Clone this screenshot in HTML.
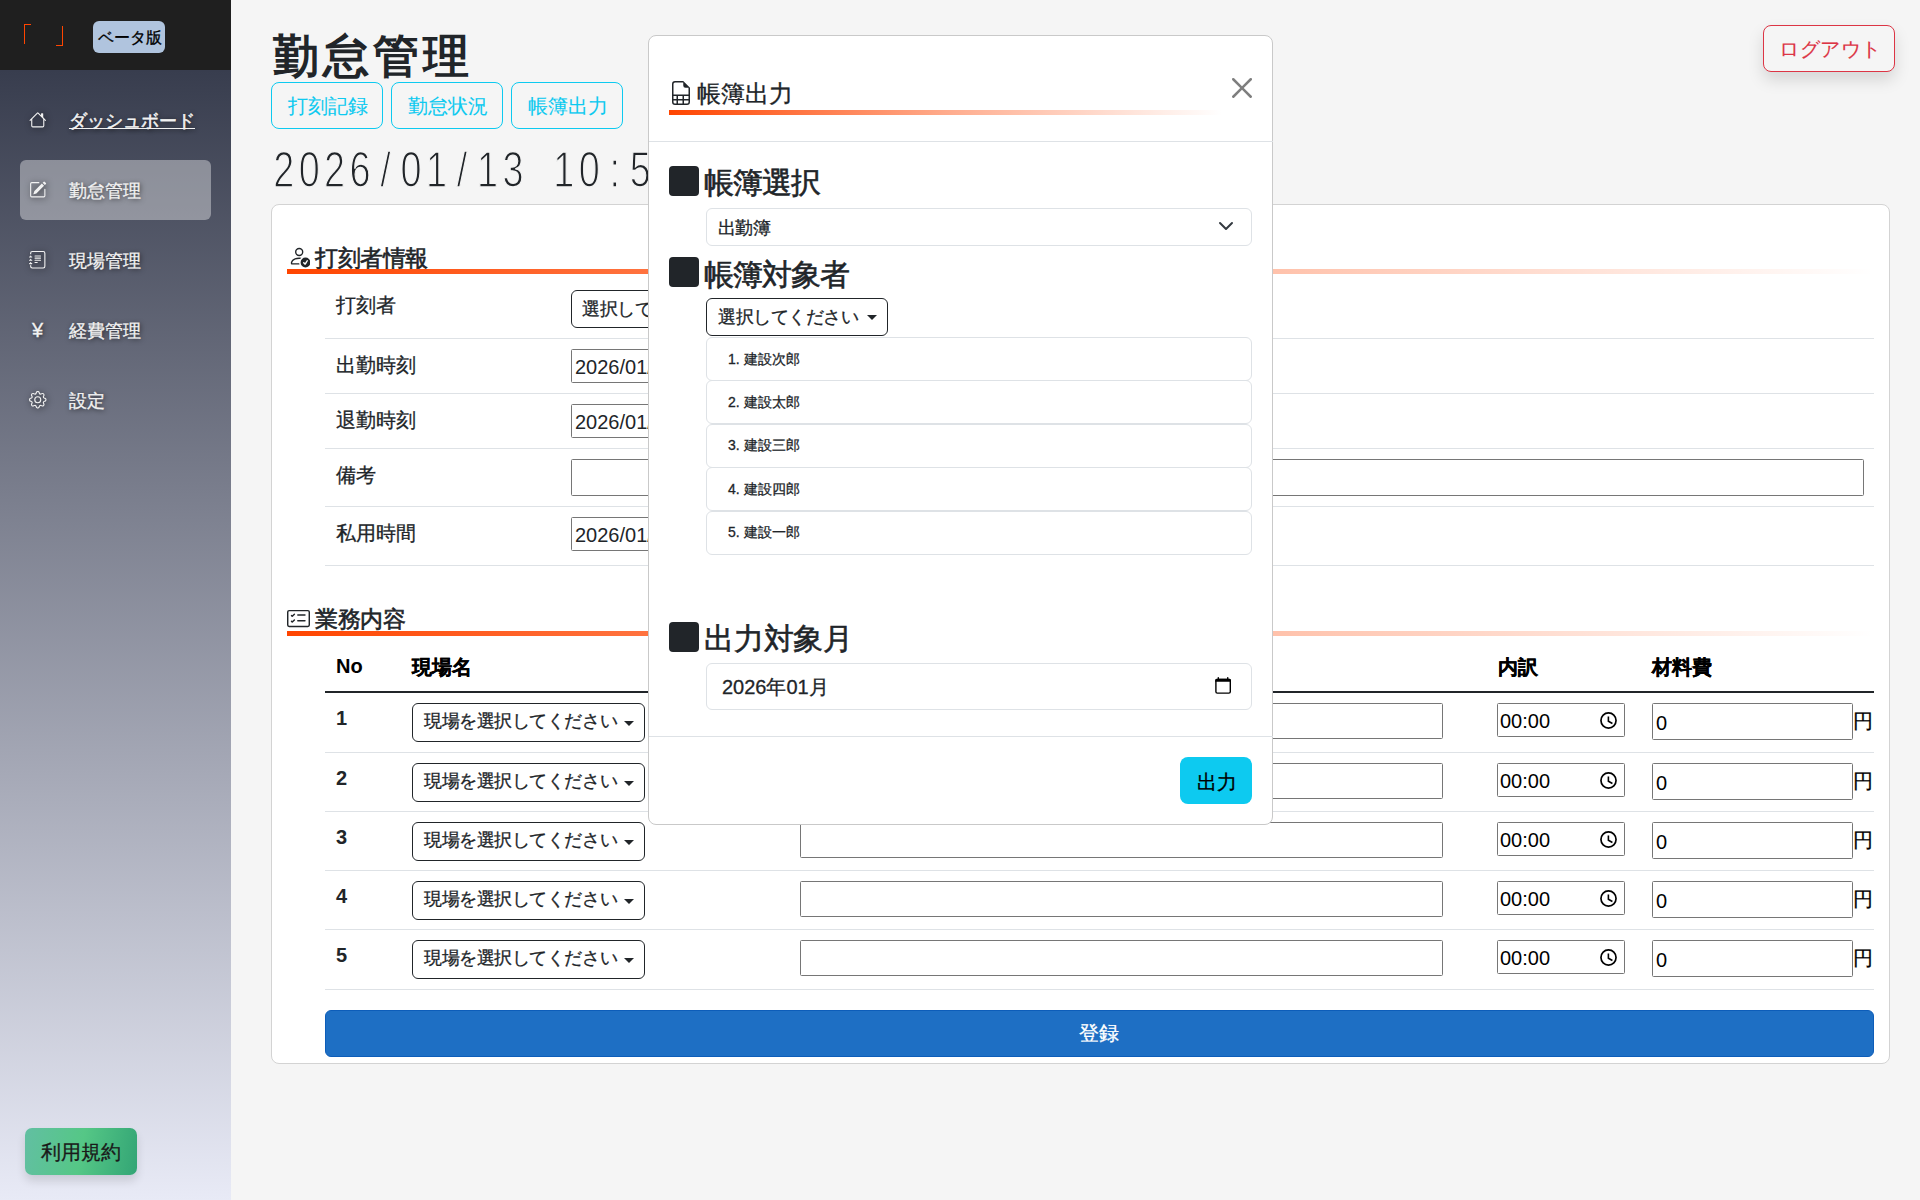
<!DOCTYPE html>
<html lang="ja">
<head>
<meta charset="utf-8">
<title>勤怠管理</title>
<style>
*{box-sizing:border-box;margin:0;padding:0}
html,body{width:1920px;height:1200px;overflow:hidden}
body{background:#f5f5f5;color:#212529;font-family:"Liberation Sans",sans-serif;position:relative}
.t{position:absolute;white-space:nowrap;line-height:1}
.abs{position:absolute}
.t{-webkit-text-stroke:.3px currentColor}
.lt{-webkit-text-stroke:0}
svg{display:block}
/* sidebar */
#side{position:absolute;left:0;top:70px;width:231px;height:1130px;background:linear-gradient(to bottom,#383d4e 0%,#e8eaf6 100%)}
#sidehead{position:absolute;left:0;top:0;width:231px;height:70px;background:#1f1f1f}
.brk{position:absolute;border-color:#ff4500;border-style:solid}
#badge{position:absolute;left:93px;top:21px;width:72px;height:32px;background:#b0c4de;border-radius:6px}
.nav{color:#f2f2f2;font-size:18px;text-shadow:1px 1px 5px rgba(0,0,0,.75)}
.nico{position:absolute;filter:drop-shadow(1px 1px 3px rgba(0,0,0,.7))}
#active{position:absolute;left:20px;top:160px;width:191px;height:60px;border-radius:6px;background:rgba(255,255,255,.38)}
#terms{position:absolute;left:25px;top:1128px;width:112px;height:47px;border-radius:7px;background:linear-gradient(100deg,#62bfa2 0%,#55c786 50%,#33a575 100%);box-shadow:0 6px 10px rgba(0,0,0,.12)}
/* main */
.obtn{position:absolute;top:82px;height:47px;width:112px;border:1px solid #0dcaf0;border-radius:8px}
#logout{position:absolute;left:1763px;top:25px;width:132px;height:47px;border:1px solid #dc3545;border-radius:8px;box-shadow:0 8px 16px rgba(0,0,0,.13);background:#f5f5f5}
#card{position:absolute;left:271px;top:204px;width:1619px;height:860px;background:#fff;border:1px solid #d3d3d3;border-radius:8px}
.uline{position:absolute;height:5px;background:linear-gradient(to right,#ff4500 0%,rgba(255,69,0,.35) 60%,rgba(255,69,0,0) 100%)}
.hr{position:absolute;left:325px;width:1549px;height:1px;background:#dee2e6}
.inp{position:absolute;border:1px solid #767676;border-radius:1.5px;background:#fff}
.dd{position:absolute;border:1px solid #212529;border-radius:6px;background:#fff}
.caret{position:absolute;width:0;height:0;border-left:5px solid transparent;border-right:5px solid transparent;border-top:5px solid #212529}
/* modal */
#modal{position:absolute;left:648px;top:35px;width:625px;height:790px;background:#fff;border:1px solid #c9c9c9;border-radius:8px}
.sq{position:absolute;left:669px;width:30px;height:30px;background:#212529;border-radius:4px}
.litem{position:absolute;left:706px;width:546px;height:44px;border:1px solid #dee2e6;border-radius:6px;background:#fff}
</style>
</head>
<body>

<!-- ================= SIDEBAR ================= -->
<div id="side"></div>
<div id="sidehead"></div>
<div class="brk" style="left:23.8px;top:23.8px;width:7.2px;height:20px;border-width:1.3px 0 0 1.3px"></div>
<div class="brk" style="left:56px;top:26px;width:7px;height:20px;border-width:0 1.3px 1.3px 0"></div>
<div id="badge"></div>
<div class="t" style="left:97.5px;top:30px;font-size:16px;color:#000">ベータ版</div>

<div id="active"></div>

<!-- house -->
<svg class="nico" style="left:29px;top:111px" width="17.5" height="17.5" viewBox="0 0 16 16" fill="#f2f2f2"><path d="M8.707 1.5a1 1 0 0 0-1.414 0L.646 8.146a.5.5 0 0 0 .708.708L2 8.207V13.5A1.5 1.5 0 0 0 3.5 15h9a1.5 1.5 0 0 0 1.5-1.5V8.207l.646.647a.5.5 0 0 0 .708-.708L13 5.793V2.5a.5.5 0 0 0-.5-.5h-1a.5.5 0 0 0-.5.5v1.293zM13 7.207V13.5a.5.5 0 0 1-.5.5h-9a.5.5 0 0 1-.5-.5V7.207l5-5z"/></svg>
<div class="t nav" style="left:69px;top:112px;text-decoration:underline">ダッシュボード</div>

<!-- pencil-square -->
<svg class="nico" style="left:29px;top:181px" width="17.5" height="17.5" viewBox="0 0 16 16" fill="#f2f2f2"><path d="M15.502 1.94a.5.5 0 0 1 0 .706L14.459 3.69l-2-2L13.502.646a.5.5 0 0 1 .707 0l1.293 1.293zm-1.75 2.456-2-2L4.939 9.21a.5.5 0 0 0-.121.196l-.805 2.414a.25.25 0 0 0 .316.316l2.414-.805a.5.5 0 0 0 .196-.12l6.813-6.814z"/><path fill-rule="evenodd" d="M1 13.5A1.5 1.5 0 0 0 2.5 15h11a1.5 1.5 0 0 0 1.5-1.5v-6a.5.5 0 0 0-1 0v6a.5.5 0 0 1-.5.5h-11a.5.5 0 0 1-.5-.5v-11a.5.5 0 0 1 .5-.5H9a.5.5 0 0 0 0-1H2.5A1.5 1.5 0 0 0 1 2.5z"/></svg>
<div class="t nav" style="left:69px;top:182px">勤怠管理</div>

<!-- journal-text -->
<svg class="nico" style="left:29px;top:251px" width="17.5" height="17.5" viewBox="0 0 16 16" fill="#f2f2f2"><path d="M5 10.5a.5.5 0 0 1 .5-.5h2a.5.5 0 0 1 0 1h-2a.5.5 0 0 1-.5-.5m0-2a.5.5 0 0 1 .5-.5h5a.5.5 0 0 1 0 1h-5a.5.5 0 0 1-.5-.5m0-2a.5.5 0 0 1 .5-.5h5a.5.5 0 0 1 0 1h-5a.5.5 0 0 1-.5-.5m0-2a.5.5 0 0 1 .5-.5h5a.5.5 0 0 1 0 1h-5a.5.5 0 0 1-.5-.5"/><path d="M3 0h10a2 2 0 0 1 2 2v12a2 2 0 0 1-2 2H3a2 2 0 0 1-2-2v-1h1v1a1 1 0 0 0 1 1h10a1 1 0 0 0 1-1V2a1 1 0 0 0-1-1H3a1 1 0 0 0-1 1v1H1V2a2 2 0 0 1 2-2"/><path d="M1 5v-.5a.5.5 0 0 1 1 0V5h.5a.5.5 0 0 1 0 1h-2a.5.5 0 0 1 0-1zm0 3v-.5a.5.5 0 0 1 1 0V8h.5a.5.5 0 0 1 0 1h-2a.5.5 0 0 1 0-1zm0 3v-.5a.5.5 0 0 1 1 0v.5h.5a.5.5 0 0 1 0 1h-2a.5.5 0 0 1 0-1z"/></svg>
<div class="t nav" style="left:69px;top:252px">現場管理</div>

<!-- yen -->
<div class="t nav" style="left:32px;top:320px;font-size:20px">¥</div>
<div class="t nav" style="left:69px;top:322px">経費管理</div>

<!-- gear -->
<svg class="nico" style="left:29px;top:391px" width="17.5" height="17.5" viewBox="0 0 16 16" fill="#f2f2f2"><path d="M8 4.754a3.246 3.246 0 1 0 0 6.492 3.246 3.246 0 0 0 0-6.492M5.754 8a2.246 2.246 0 1 1 4.492 0 2.246 2.246 0 0 1-4.492 0"/><path d="M9.796 1.343c-.527-1.79-3.065-1.79-3.592 0l-.094.319a.873.873 0 0 1-1.255.52l-.292-.16c-1.64-.892-3.433.902-2.540 2.541l.159.292a.873.873 0 0 1-.52 1.255l-.319.094c-1.79.527-1.79 3.065 0 3.592l.319.094a.873.873 0 0 1 .52 1.255l-.16.292c-.892 1.64.901 3.434 2.541 2.540l.292-.159a.873.873 0 0 1 1.255.52l.094.319c.527 1.79 3.065 1.79 3.592 0l.094-.319a.873.873 0 0 1 1.255-.52l.292.16c1.64.893 3.434-.902 2.540-2.541l-.159-.292a.873.873 0 0 1 .52-1.255l.319-.094c1.79-.527 1.79-3.065 0-3.592l-.319-.094a.873.873 0 0 1-.52-1.255l.16-.292c.893-1.640-.902-3.433-2.541-2.540l-.292.159a.873.873 0 0 1-1.255-.52zm-2.633.283c.246-.835 1.428-.835 1.674 0l.094.319a1.873 1.873 0 0 0 2.693 1.115l.291-.16c.764-.415 1.6.42 1.184 1.185l-.159.292a1.873 1.873 0 0 0 1.116 2.692l.318.094c.835.246.835 1.428 0 1.674l-.319.094a1.873 1.873 0 0 0-1.115 2.693l.16.291c.415.764-.42 1.6-1.185 1.184l-.291-.159a1.873 1.873 0 0 0-2.693 1.116l-.094.318c-.246.835-1.428.835-1.674 0l-.094-.319a1.873 1.873 0 0 0-2.692-1.115l-.292.16c-.764.415-1.6-.42-1.184-1.185l.159-.291A1.873 1.873 0 0 0 1.945 8.930l-.319-.094c-.835-.246-.835-1.428 0-1.674l.319-.094A1.873 1.873 0 0 0 3.060 4.377l-.16-.292c-.415-.764.42-1.6 1.185-1.184l.292.159a1.873 1.873 0 0 0 2.692-1.115z"/></svg>
<div class="t nav" style="left:69px;top:392px">設定</div>

<div id="terms"></div>
<div class="t" style="left:41px;top:1142px;font-size:20px;color:#1a1a1a">利用規約</div>

<!-- ================= MAIN ================= -->
<div class="t" style="left:273px;top:33px;font-size:46px;font-weight:bold;letter-spacing:4px;-webkit-text-stroke:0">勤怠管理</div>

<div class="obtn" style="left:271px"></div>
<div class="t" style="left:288px;top:96px;font-size:20px;color:#0dcaf0;-webkit-text-stroke:.1px currentColor">打刻記録</div>
<div class="obtn" style="left:391px"></div>
<div class="t" style="left:408px;top:96px;font-size:20px;color:#0dcaf0;-webkit-text-stroke:.1px currentColor">勤怠状況</div>
<div class="obtn" style="left:511px"></div>
<div class="t" style="left:528px;top:96px;font-size:20px;color:#0dcaf0;-webkit-text-stroke:.1px currentColor">帳簿出力</div>

<div class="t" style="left:271px;top:145px;font-size:50.5px;transform:scaleX(.75);transform-origin:0 0;color:#212529;-webkit-text-stroke:1.4px #f5f5f5"><span style="display:inline-block;width:33.96px;text-align:center">2</span><span style="display:inline-block;width:33.96px;text-align:center">0</span><span style="display:inline-block;width:33.96px;text-align:center">2</span><span style="display:inline-block;width:33.96px;text-align:center">6</span><span style="display:inline-block;width:33.96px;text-align:center">/</span><span style="display:inline-block;width:33.96px;text-align:center">0</span><span style="display:inline-block;width:33.96px;text-align:center">1</span><span style="display:inline-block;width:33.96px;text-align:center">/</span><span style="display:inline-block;width:33.96px;text-align:center">1</span><span style="display:inline-block;width:33.96px;text-align:center">3</span><span style="display:inline-block;width:33.96px;text-align:center">&nbsp;</span><span style="display:inline-block;width:33.96px;text-align:center">1</span><span style="display:inline-block;width:33.96px;text-align:center">0</span><span style="display:inline-block;width:33.96px;text-align:center">:</span><span style="display:inline-block;width:33.96px;text-align:center">5</span><span style="display:inline-block;width:33.96px;text-align:center">7</span><span style="display:inline-block;width:33.96px;text-align:center">:</span><span style="display:inline-block;width:33.96px;text-align:center">3</span><span style="display:inline-block;width:33.96px;text-align:center">2</span></div>

<div id="logout"></div>
<div class="t" style="left:1779px;top:39px;font-size:20px;letter-spacing:.5px;color:#dc3545;-webkit-text-stroke:.15px currentColor">ログアウト</div>

<div id="card"></div>

<!-- section 1 -->
<svg class="abs" style="left:287.5px;top:245.2px" width="22.4" height="22.4" viewBox="0 0 16 16" fill="#212529"><path d="M12.5 16a3.5 3.5 0 1 0 0-7 3.5 3.5 0 0 0 0 7m1.679-4.493-1.335 2.226a.75.75 0 0 1-1.174.144l-.774-.773a.5.5 0 0 1 .708-.708l.547.548 1.17-1.951a.5.5 0 1 1 .858.514M11 5a3 3 0 1 1-6 0 3 3 0 0 1 6 0M8 7a2 2 0 1 0 0-4 2 2 0 0 0 0 4"/><path d="M8.256 14a4.5 4.5 0 0 1-.229-1.004H3c.001-.246.154-.986.832-1.664C4.484 10.68 5.711 10 8 10q.39 0 .74.025c.226-.341.496-.65.804-.918Q8.844 9.002 8 9c-5 0-6 3-6 4s1 1 1 1z"/></svg>
<div class="t" style="left:315px;top:246.5px;font-size:23px;letter-spacing:-.4px;-webkit-text-stroke:.6px #212529">打刻者情報</div>
<div class="uline" style="left:287px;top:269px;width:1587px"></div>

<div class="t" style="left:336px;top:295px;font-size:20px">打刻者</div>
<div class="dd" style="left:571px;top:290px;width:181px;height:38px"></div>
<div class="t" style="left:582px;top:301px;font-size:17.6px;letter-spacing:-.45px">選択してください</div>
<div class="hr" style="top:338px"></div>

<div class="t" style="left:336px;top:355px;font-size:20px">出勤時刻</div>
<div class="inp" style="left:571px;top:349px;width:250px;height:34px"></div>
<div class="t lt" style="left:575px;top:357px;font-size:20px">2026/01/13 08:00</div>
<div class="hr" style="top:393px"></div>

<div class="t" style="left:336px;top:410px;font-size:20px">退勤時刻</div>
<div class="inp" style="left:571px;top:404px;width:250px;height:34px"></div>
<div class="t lt" style="left:575px;top:412px;font-size:20px">2026/01/13 17:00</div>
<div class="hr" style="top:448px"></div>

<div class="t" style="left:336px;top:465px;font-size:20px">備考</div>
<div class="inp" style="left:571px;top:459px;width:1293px;height:37px"></div>
<div class="hr" style="top:506px"></div>

<div class="t" style="left:336px;top:523px;font-size:20px">私用時間</div>
<div class="inp" style="left:571px;top:517px;width:250px;height:34px"></div>
<div class="t lt" style="left:575px;top:525px;font-size:20px">2026/01/13 00:00</div>
<div class="hr" style="top:565px"></div>

<!-- section 2 -->
<svg class="abs" style="left:287px;top:607px" width="23" height="23" viewBox="0 0 16 16" fill="#212529"><path d="M14.5 3a.5.5 0 0 1 .5.5v9a.5.5 0 0 1-.5.5h-13a.5.5 0 0 1-.5-.5v-9a.5.5 0 0 1 .5-.5zm-13-1A1.5 1.5 0 0 0 0 3.5v9A1.5 1.5 0 0 0 1.5 14h13a1.5 1.5 0 0 0 1.5-1.5v-9A1.5 1.5 0 0 0 14.5 2z"/><path d="M7 5.5a.5.5 0 0 1 .5-.5h5a.5.5 0 0 1 0 1h-5a.5.5 0 0 1-.5-.5m-1.496-.854a.5.5 0 0 1 0 .708l-1.5 1.5a.5.5 0 0 1-.708 0l-.5-.5a.5.5 0 1 1 .708-.708l.146.147 1.146-1.147a.5.5 0 0 1 .708 0M7 9.5a.5.5 0 0 1 .5-.5h5a.5.5 0 0 1 0 1h-5a.5.5 0 0 1-.5-.5m-1.496-.854a.5.5 0 0 1 0 .708l-1.5 1.5a.5.5 0 0 1-.708 0l-.5-.5a.5.5 0 0 1 .708-.708l.146.147 1.146-1.147a.5.5 0 0 1 .708 0"/></svg>
<div class="t" style="left:315px;top:608px;font-size:23px;letter-spacing:-.5px;-webkit-text-stroke:.6px #212529">業務内容</div>
<div class="uline" style="left:287px;top:631px;width:1587px"></div>

<div class="t lt" style="left:336px;top:656px;font-size:20px;font-weight:bold;color:#000">No</div>
<div class="t" style="left:412px;top:657px;font-size:20px;font-weight:bold;color:#000">現場名</div>
<div class="t" style="left:800px;top:657px;font-size:20px;font-weight:bold;color:#000">作業内容</div>
<div class="t" style="left:1498px;top:657px;font-size:20px;font-weight:bold;color:#000">内訳</div>
<div class="t" style="left:1652px;top:657px;font-size:20px;font-weight:bold;color:#000">材料費</div>
<div class="abs" style="left:325px;top:691px;width:1549px;height:2px;background:#212529"></div>
<div class="t lt" style="left:336px;top:708px;font-size:20px;font-weight:bold">1</div>
<div class="dd" style="left:412px;top:703px;width:233px;height:39px"></div>
<div class="t" style="left:424px;top:713px;font-size:17.6px;letter-spacing:-.45px">現場を選択してください</div>
<div class="caret" style="left:624px;top:720.5px"></div>
<div class="inp" style="left:800px;top:703px;width:643px;height:36px"></div>
<div class="inp" style="left:1497px;top:703px;width:128px;height:34px"></div>
<div class="t lt" style="left:1500px;top:710.5px;font-size:20px;color:#000">00:00</div>
<svg class="abs" style="left:1600px;top:712px" width="17" height="17" viewBox="0 0 16 16"><circle cx="8" cy="8" r="7.1" fill="none" stroke="#000" stroke-width="1.6"/><path d="M7.9 4.3V8.7L11.7 10.8" fill="none" stroke="#000" stroke-width="1.5" stroke-linejoin="miter"/></svg>
<div class="inp" style="left:1652px;top:703px;width:201px;height:37px"></div>
<div class="t lt" style="left:1656px;top:713px;font-size:20px;color:#000">0</div>
<div class="t" style="left:1853px;top:711px;font-size:20px;color:#000">円</div>
<div class="hr" style="top:752px"></div>
<div class="t lt" style="left:336px;top:768px;font-size:20px;font-weight:bold">2</div>
<div class="dd" style="left:412px;top:763px;width:233px;height:39px"></div>
<div class="t" style="left:424px;top:773px;font-size:17.6px;letter-spacing:-.45px">現場を選択してください</div>
<div class="caret" style="left:624px;top:780.5px"></div>
<div class="inp" style="left:800px;top:763px;width:643px;height:36px"></div>
<div class="inp" style="left:1497px;top:763px;width:128px;height:34px"></div>
<div class="t lt" style="left:1500px;top:770.5px;font-size:20px;color:#000">00:00</div>
<svg class="abs" style="left:1600px;top:772px" width="17" height="17" viewBox="0 0 16 16"><circle cx="8" cy="8" r="7.1" fill="none" stroke="#000" stroke-width="1.6"/><path d="M7.9 4.3V8.7L11.7 10.8" fill="none" stroke="#000" stroke-width="1.5" stroke-linejoin="miter"/></svg>
<div class="inp" style="left:1652px;top:763px;width:201px;height:37px"></div>
<div class="t lt" style="left:1656px;top:773px;font-size:20px;color:#000">0</div>
<div class="t" style="left:1853px;top:771px;font-size:20px;color:#000">円</div>
<div class="hr" style="top:811px"></div>
<div class="t lt" style="left:336px;top:827px;font-size:20px;font-weight:bold">3</div>
<div class="dd" style="left:412px;top:822px;width:233px;height:39px"></div>
<div class="t" style="left:424px;top:832px;font-size:17.6px;letter-spacing:-.45px">現場を選択してください</div>
<div class="caret" style="left:624px;top:839.5px"></div>
<div class="inp" style="left:800px;top:822px;width:643px;height:36px"></div>
<div class="inp" style="left:1497px;top:822px;width:128px;height:34px"></div>
<div class="t lt" style="left:1500px;top:829.5px;font-size:20px;color:#000">00:00</div>
<svg class="abs" style="left:1600px;top:831px" width="17" height="17" viewBox="0 0 16 16"><circle cx="8" cy="8" r="7.1" fill="none" stroke="#000" stroke-width="1.6"/><path d="M7.9 4.3V8.7L11.7 10.8" fill="none" stroke="#000" stroke-width="1.5" stroke-linejoin="miter"/></svg>
<div class="inp" style="left:1652px;top:822px;width:201px;height:37px"></div>
<div class="t lt" style="left:1656px;top:832px;font-size:20px;color:#000">0</div>
<div class="t" style="left:1853px;top:830px;font-size:20px;color:#000">円</div>
<div class="hr" style="top:870px"></div>
<div class="t lt" style="left:336px;top:886px;font-size:20px;font-weight:bold">4</div>
<div class="dd" style="left:412px;top:881px;width:233px;height:39px"></div>
<div class="t" style="left:424px;top:891px;font-size:17.6px;letter-spacing:-.45px">現場を選択してください</div>
<div class="caret" style="left:624px;top:898.5px"></div>
<div class="inp" style="left:800px;top:881px;width:643px;height:36px"></div>
<div class="inp" style="left:1497px;top:881px;width:128px;height:34px"></div>
<div class="t lt" style="left:1500px;top:888.5px;font-size:20px;color:#000">00:00</div>
<svg class="abs" style="left:1600px;top:890px" width="17" height="17" viewBox="0 0 16 16"><circle cx="8" cy="8" r="7.1" fill="none" stroke="#000" stroke-width="1.6"/><path d="M7.9 4.3V8.7L11.7 10.8" fill="none" stroke="#000" stroke-width="1.5" stroke-linejoin="miter"/></svg>
<div class="inp" style="left:1652px;top:881px;width:201px;height:37px"></div>
<div class="t lt" style="left:1656px;top:891px;font-size:20px;color:#000">0</div>
<div class="t" style="left:1853px;top:889px;font-size:20px;color:#000">円</div>
<div class="hr" style="top:929px"></div>
<div class="t lt" style="left:336px;top:945px;font-size:20px;font-weight:bold">5</div>
<div class="dd" style="left:412px;top:940px;width:233px;height:39px"></div>
<div class="t" style="left:424px;top:950px;font-size:17.6px;letter-spacing:-.45px">現場を選択してください</div>
<div class="caret" style="left:624px;top:957.5px"></div>
<div class="inp" style="left:800px;top:940px;width:643px;height:36px"></div>
<div class="inp" style="left:1497px;top:940px;width:128px;height:34px"></div>
<div class="t lt" style="left:1500px;top:947.5px;font-size:20px;color:#000">00:00</div>
<svg class="abs" style="left:1600px;top:949px" width="17" height="17" viewBox="0 0 16 16"><circle cx="8" cy="8" r="7.1" fill="none" stroke="#000" stroke-width="1.6"/><path d="M7.9 4.3V8.7L11.7 10.8" fill="none" stroke="#000" stroke-width="1.5" stroke-linejoin="miter"/></svg>
<div class="inp" style="left:1652px;top:940px;width:201px;height:37px"></div>
<div class="t lt" style="left:1656px;top:950px;font-size:20px;color:#000">0</div>
<div class="t" style="left:1853px;top:948px;font-size:20px;color:#000">円</div>
<div class="hr" style="top:989px"></div>

<div class="abs" style="left:325px;top:1010px;width:1549px;height:47px;background:#1e6fc4;border:1px solid #0d5db9;border-radius:6px"></div>
<div class="t" style="left:1079px;top:1023px;font-size:20px;color:#fff">登録</div>

<!-- ================= MODAL ================= -->
<div id="modal"></div>
<svg class="abs" style="left:669px;top:81px" width="24" height="24" viewBox="0 0 16 16" fill="#212529"><path d="M14 14V4.5L9.5 0H4a2 2 0 0 0-2 2v12a2 2 0 0 0 2 2h8a2 2 0 0 0 2-2M9.5 3A1.5 1.5 0 0 0 11 4.5h2V9H3V2a1 1 0 0 1 1-1h5.5zM3 12v-2h2v2zm0 1h2v2H4a1 1 0 0 1-1-1zm3 2v-2h3v2zm4 0v-2h3v1a1 1 0 0 1-1 1zm3-3h-3v-2h3zm-7 0v-2h3v2z"/></svg>
<div class="t" style="left:697px;top:82px;font-size:24px">帳簿出力</div>
<div class="uline" style="left:669px;top:110px;width:553px;background:linear-gradient(to right,#ff4500 0%,rgba(255,69,0,.45) 50%,rgba(255,69,0,0) 100%)"></div>
<svg class="abs" style="left:1232px;top:78px" width="20" height="20" viewBox="0 0 16 16" fill="#000" opacity=".5"><path d="M.293.293a1 1 0 0 1 1.414 0L8 6.586 14.293.293a1 1 0 1 1 1.414 1.414L9.414 8l6.293 6.293a1 1 0 0 1-1.414 1.414L8 9.414l-6.293 6.293a1 1 0 0 1-1.414-1.414L6.586 8 .293 1.707a1 1 0 0 1 0-1.414"/></svg>
<div class="abs" style="left:649px;top:141px;width:624px;height:1px;background:#dee2e6"></div>

<div class="sq" style="top:166px"></div>
<div class="t" style="left:704px;top:168px;font-size:30px;letter-spacing:-.9px;-webkit-text-stroke:.6px #212529">帳簿選択</div>
<div class="abs" style="left:706px;top:208px;width:546px;height:38px;border:1px solid #dee2e6;border-radius:6px;background:#fff"></div>
<div class="t" style="left:718px;top:220px;font-size:17.6px;letter-spacing:-.6px">出勤簿</div>
<svg class="abs" style="left:1218px;top:218px" width="16" height="16" viewBox="0 0 16 16"><path d="m2 5 6 6 6-6" fill="none" stroke="#343a40" stroke-linecap="round" stroke-linejoin="round" stroke-width="2"/></svg>

<div class="sq" style="top:257px"></div>
<div class="t" style="left:704px;top:259.5px;font-size:30px;letter-spacing:-.9px;-webkit-text-stroke:.6px #212529">帳簿対象者</div>
<div class="dd" style="left:706px;top:298px;width:182px;height:38px"></div>
<div class="t" style="left:718px;top:309px;font-size:17.6px;letter-spacing:-.45px">選択してください</div>
<div class="caret" style="left:867px;top:315px"></div>
<div class="litem" style="top:337.0px"></div>
<div class="t" style="left:728px;top:351.5px;font-size:14px">1. 建設次郎</div>
<div class="litem" style="top:380.4px"></div>
<div class="t" style="left:728px;top:394.9px;font-size:14px">2. 建設太郎</div>
<div class="litem" style="top:423.8px"></div>
<div class="t" style="left:728px;top:438.3px;font-size:14px">3. 建設三郎</div>
<div class="litem" style="top:467.2px"></div>
<div class="t" style="left:728px;top:481.7px;font-size:14px">4. 建設四郎</div>
<div class="litem" style="top:510.6px"></div>
<div class="t" style="left:728px;top:525.1px;font-size:14px">5. 建設一郎</div>

<div class="sq" style="top:622px"></div>
<div class="t" style="left:704px;top:623.5px;font-size:30px;letter-spacing:-.2px;-webkit-text-stroke:.6px #212529">出力対象月</div>
<div class="abs" style="left:706px;top:663px;width:546px;height:47px;border:1px solid #dee2e6;border-radius:6px;background:#fff"></div>
<div class="t" style="left:722px;top:677px;font-size:20px">2026年01月</div>
<svg class="abs" style="left:1214px;top:675px" width="18" height="20" viewBox="0 0 18 20"><rect x="1.9" y="4.5" width="14.4" height="13.6" rx="1.4" fill="none" stroke="#000" stroke-width="1.4"/><path d="M1.2 5.3a1.5 1.5 0 0 1 1.5-1.5h12.8a1.5 1.5 0 0 1 1.5 1.5v1.5h-15.8z" fill="#000"/><rect x="3.7" y="1.9" width="1.3" height="2.6" rx=".6" fill="#000"/><rect x="13.05" y="1.9" width="1.3" height="2.6" rx=".6" fill="#000"/></svg>
<div class="abs" style="left:649px;top:736px;width:624px;height:1px;background:#dee2e6"></div>
<div class="abs" style="left:1180px;top:757px;width:72px;height:47px;background:#0dcaf0;border-radius:8px"></div>
<div class="t" style="left:1197px;top:772px;font-size:20px;color:#000">出力</div>

</body>
</html>
